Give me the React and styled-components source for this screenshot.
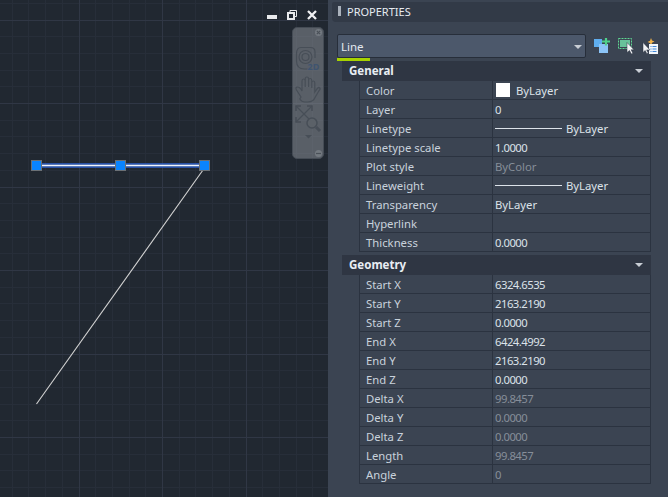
import React from 'react';
import styled, { createGlobalStyle } from 'styled-components';

const Global = createGlobalStyle`
  html, body { margin: 0; padding: 0; background: #3b4452; }
  #root { width: 668px; height: 497px; overflow: hidden; }
`;

const Screen = styled.div`
  display: flex; width: 668px; height: 497px;
  font-family: "Noto Sans", "Open Sans", sans-serif;
  font-size: 11.3px; color: #dfe6ee;
`;
const Canvas = styled.div`
  position: relative; flex: 0 0 328px; height: 497px; background: #212831; overflow: hidden;
`;
const Drawing = styled.svg`display: block;`;
const WindowControls = styled.div`
  position: absolute; top: 10px; left: 267px; display: flex; gap: 10px; align-items: flex-start;
`;
const NavBar = styled.div`
  position: absolute; left: 292px; top: 27px; width: 32px; height: 132px;
  border-radius: 5px; background: rgba(134, 139, 146, 0.56); border: 1px solid #454c55; box-sizing: border-box;
`;
const Panel = styled.div`
  flex: 1; display: flex; flex-direction: column; background: #3b4452; padding-top: 2px; min-width: 0;
`;
const TitleBar = styled.div`
  display: flex; align-items: center; height: 20px; margin-left: 4px; padding: 0 0 2px 6px; gap: 6px;
  box-sizing: border-box;
  background: #323a47; border-radius: 2px 0 0 4px;
  font-size: 11px; color: #e6ebf1;
`;
const Grip = styled.span`
  width: 3px; height: 10px; flex: none;
  background-image: radial-gradient(#aab2bc 0.65px, transparent 0.75px);
  background-size: 1.5px 2px;
`;
const SelectorRow = styled.div`
  display: flex; align-items: center; padding: 12px 0 0 9px; gap: 8px; height: 24px;
`;
const Combo = styled.div`
  position: relative; box-sizing: border-box; width: 249px; height: 24px; display: flex; align-items: center;
  padding-left: 3px; background: #4c586b; border: 1px solid #272e3a; border-radius: 2px;
  color: #e3e9f0; font-size: 11.5px;
`;
const ComboArrow = styled.span`
  position: absolute; right: 3px; top: 10px; width: 0; height: 0;
  border-left: 4px solid transparent; border-right: 4px solid transparent; border-top: 4px solid #c9ced5;
`;
const Tools = styled.div`display: flex; gap: 6px; align-items: center;`;
const Accent = styled.div`width: 33px; height: 3px; margin-left: 9px; background: #a8d300;`;
const Sections = styled.div`
  margin: 0 17px 0 14px; display: flex; flex-direction: column;
`;
const SectionBlock = styled.section`margin-top: ${p => p.$gap}px;`;
const SectionHeader = styled.div`
  position: relative; box-sizing: border-box; height: 20px; display: flex; align-items: center; padding: 0 0 1px 7px;
  background: #2f3643; font-weight: 700; font-size: 11.5px; color: #e8edf3;
`;
const HeaderArrow = styled.span`
  position: absolute; right: 8px; top: 8px; width: 0; height: 0;
  border-left: 4px solid transparent; border-right: 4px solid transparent; border-top: 4px solid #c9ced5;
`;
const Rows = styled.div`
  margin-left: 17px; border-left: 1px solid #2b3340; border-right: 1px solid #2b3340;
`;
const Row = styled.div`
  box-sizing: border-box; height: 19px; display: grid; grid-template-columns: 133px 1fr;
  border-bottom: 1px solid #2b3340;
`;
const Label = styled.div`
  display: flex; align-items: center; padding-left: 6px; border-right: 1px solid #2b3340; color: #c9d2dc;
`;
const Value = styled.div`
  display: flex; align-items: center; padding-left: 2px; gap: 6px; min-width: 0;
  color: ${p => (p.$muted ? '#868e99' : '#dce2e9')};
  letter-spacing: ${p => (p.$numeric ? '-0.52px' : '0')};
`;
const Swatch = styled.span`
  width: 14px; height: 14px; background: #fff; flex: none; margin-left: 1px;
`;
const LineSample = styled.span`width: 67px; height: 1px; background: #dce2e9; flex: none; margin-right: -2px;`;

const minor = [], major = [];
for (let i = -4; i < 30; i++) {
  const x = Math.floor(79 + i * 16.7) + 0.5;
  if (x > 0 && x < 328) (i % 5 === 0 ? major : minor).push(x);
}
const minorY = [], majorY = [];
for (let i = -12; i < 24; i++) {
  const y = Math.floor(187 + i * 16.7) + 0.5;
  if (y > 0 && y < 497) (i % 5 === 0 ? majorY : minorY).push(y);
}

const GripSquare = ({ x, y }) => (
  <g>
    <rect x={x - 5.5} y={y - 5.5} width="11" height="11" fill="#6b7075" />
    <rect x={x - 4.5} y={y - 4.5} width="9" height="9" fill="#0a84ff" />
  </g>
);

const CanvasDrawing = () => (
  <Drawing width="328" height="497" viewBox="0 0 328 497">
    {minor.map(x => <line key={x} x1={x} x2={x} y1="0" y2="497" stroke="#272e39" />)}
    {minorY.map(y => <line key={y} y1={y} y2={y} x1="0" x2="328" stroke="#272e39" />)}
    {major.map(x => <line key={x} x1={x} x2={x} y1="0" y2="497" stroke="#303745" />)}
    {majorY.map(y => <line key={y} y1={y} y2={y} x1="0" x2="328" stroke="#303745" />)}
    <line x1="36" y1="165.500" x2="204" y2="165.500" stroke="#2a5cc0" strokeWidth="5" opacity="0.8" />
    <line x1="36" y1="165.500" x2="204" y2="165.500" stroke="#f2f5fa" strokeWidth="1.300" />
    <line x1="203" y1="170" x2="36.500" y2="404" stroke="#d4d4d4" strokeWidth="1.100" />
    <GripSquare x={36.5} y={165.5} />
    <GripSquare x={120.5} y={165.5} />
    <GripSquare x={204.5} y={165.5} />
  </Drawing>
);

const Controls = () => (
  <WindowControls>
    <svg width="10" height="10" viewBox="0 0 10 10"><rect x="0" y="5" width="10" height="4" fill="#e8eaec" /></svg>
    <svg width="10" height="10" viewBox="0 0 10 10" fill="none" stroke="#e8eaec">
      <path d="M3 2.500V.500h6.500V6.500H7.500" /><rect x="1" y="3" width="6" height="6" strokeWidth="2" />
    </svg>
    <svg width="10" height="10" viewBox="0 0 10 10" stroke="#f0f1f3" strokeWidth="2.300"><path d="M1 1l8 8M9 1L1 9" /></svg>
  </WindowControls>
);

const NavIcons = () => (
  <svg width="30" height="130" viewBox="0 0 30 130" fill="none" stroke="#474e57" strokeWidth="1.200" style={{ display: 'block' }}>
    <circle cx="25.500" cy="4.500" r="3.500" fill="#737980" stroke="none" />
    <path d="M23.800 2.800l3.400 3.400M27.200 2.800l-3.400 3.400" stroke="#4a5058" />
    <path d="M8 19.500h9.500q4.500 0 4.500 4.500v6M3.500 26q0-6.500 4.500-6.500M3.500 26v7q0 8 8 8h3" />
    <circle cx="12.500" cy="29" r="6.500" />
    <circle cx="12.500" cy="29" r="3.500" />
    <text x="14.500" y="42" fontFamily="Noto Sans, sans-serif" fontSize="9" fontWeight="700" fill="#3f5470" stroke="none">2D</text>
    <path d="M8 69l-4.500-7q-1.500-3 1-3t4.500 4V53q0-2 1.600-2t1.600 2v6-8q0-2 1.700-2t1.700 2v8-6.500q0-2 1.600-2t1.600 2V60v-5q0-2 1.500-2t1.500 2v9q2-3 3-4t2 0-1 3l-3.500 6q-2 5-7.500 5h-3q-3 0-5-3z" />
    <path d="M3 78l15 15M19 78L3 94" />
    <path d="M3 83v-5h5M14 78h5v5M3 89v5h5" strokeWidth="1.500" />
    <circle cx="19" cy="95" r="5" fill="#5b6168" strokeWidth="1.500" />
    <path d="M23 99l4 4" strokeWidth="3" />
    <path d="M12 107h7l-3.500 3.500z" fill="#474e57" stroke="none" />
    <circle cx="25.500" cy="125.500" r="3.500" fill="#737980" stroke="none" />
    <path d="M23 125.500h5" stroke="#4a5058" />
  </svg>
);

const QuickSelectIcon = () => (
  <svg width="18" height="16" viewBox="0 0 18 16">
    <rect x="0" y="1" width="8" height="8" fill="#5faeef" />
    <rect x="5" y="6" width="9" height="9" fill="#8cc4f7" />
    <path d="M8 3.500h8M12 0v7.500" stroke="#4fd08a" strokeWidth="2.200" />
  </svg>
);
const SelectIcon = () => (
  <svg width="18" height="16" viewBox="0 0 18 16">
    <rect x="0.500" y="0.500" width="13" height="10" fill="none" stroke="#5fd892" strokeDasharray="2 1" />
    <rect x="2" y="2" width="10" height="7" fill="#68c29a" />
    <path d="M9 4.500v10l2.500-2 1.800 3.500 1.600-.8-1.800-3.400H16z" fill="#f2f3f5" stroke="#2b3340" strokeWidth="0.500" />
  </svg>
);
const PickIcon = () => (
  <svg width="18" height="16" viewBox="0 0 18 16">
    <path d="M9 0l1 2.500 2.500 1L10 4.800 9.200 7.500 8 5 5.500 4 8 2.800z" fill="#f0b24a" />
    <rect x="7" y="6" width="9" height="10" fill="#f2f6fa" />
    <path d="M8.500 8.500h1M10.500 8.500h4M8.500 11h1M10.500 11h4M8.500 13.500h1M10.500 13.500h4" stroke="#3f86d8" />
    <path d="M1 4.500v10l2.200-2 1.600 3.300 1.500-.7-1.600-3.200H8z" fill="#f2f3f5" stroke="#2b3340" strokeWidth="0.500" />
  </svg>
);

const general = [
  { l: 'Color', swatch: true, v: 'ByLayer' },
  { l: 'Layer', v: '0' },
  { l: 'Linetype', line: true, v: 'ByLayer' },
  { l: 'Linetype scale', v: '1.0000' },
  { l: 'Plot style', v: 'ByColor', muted: true },
  { l: 'Lineweight', line: true, v: 'ByLayer' },
  { l: 'Transparency', v: 'ByLayer' },
  { l: 'Hyperlink', v: '' },
  { l: 'Thickness', v: '0.0000' },
];
const geometry = [
  { l: 'Start X', v: '6324.6535' },
  { l: 'Start Y', v: '2163.2190' },
  { l: 'Start Z', v: '0.0000' },
  { l: 'End X', v: '6424.4992' },
  { l: 'End Y', v: '2163.2190' },
  { l: 'End Z', v: '0.0000' },
  { l: 'Delta X', v: '99.8457', muted: true },
  { l: 'Delta Y', v: '0.0000', muted: true },
  { l: 'Delta Z', v: '0.0000', muted: true },
  { l: 'Length', v: '99.8457', muted: true },
  { l: 'Angle', v: '0', muted: true },
];

const Section = ({ title, rows, gap }) => (
  <SectionBlock $gap={gap}>
    <SectionHeader>{title}<HeaderArrow /></SectionHeader>
    <Rows>
      {rows.map(r => (
        <Row key={r.l}>
          <Label>{r.l}</Label>
          <Value $muted={r.muted} $numeric={/^[\d.]+$/.test(r.v)}>
            {r.swatch && <Swatch />}
            {r.line && <LineSample />}
            {r.v}
          </Value>
        </Row>
      ))}
    </Rows>
  </SectionBlock>
);

export default function App() {
  return (
    <Screen>
      <Global />
      <Canvas>
        <CanvasDrawing />
        <Controls />
        <NavBar><NavIcons /></NavBar>
      </Canvas>
      <Panel>
        <TitleBar><Grip />PROPERTIES</TitleBar>
        <SelectorRow>
          <Combo>Line<ComboArrow /></Combo>
          <Tools><QuickSelectIcon /><SelectIcon /><PickIcon /></Tools>
        </SelectorRow>
        <Accent />
        <Sections>
          <Section title="General" rows={general} gap={0} />
          <Section title="Geometry" rows={geometry} gap={3} />
        </Sections>
      </Panel>
    </Screen>
  );
}
